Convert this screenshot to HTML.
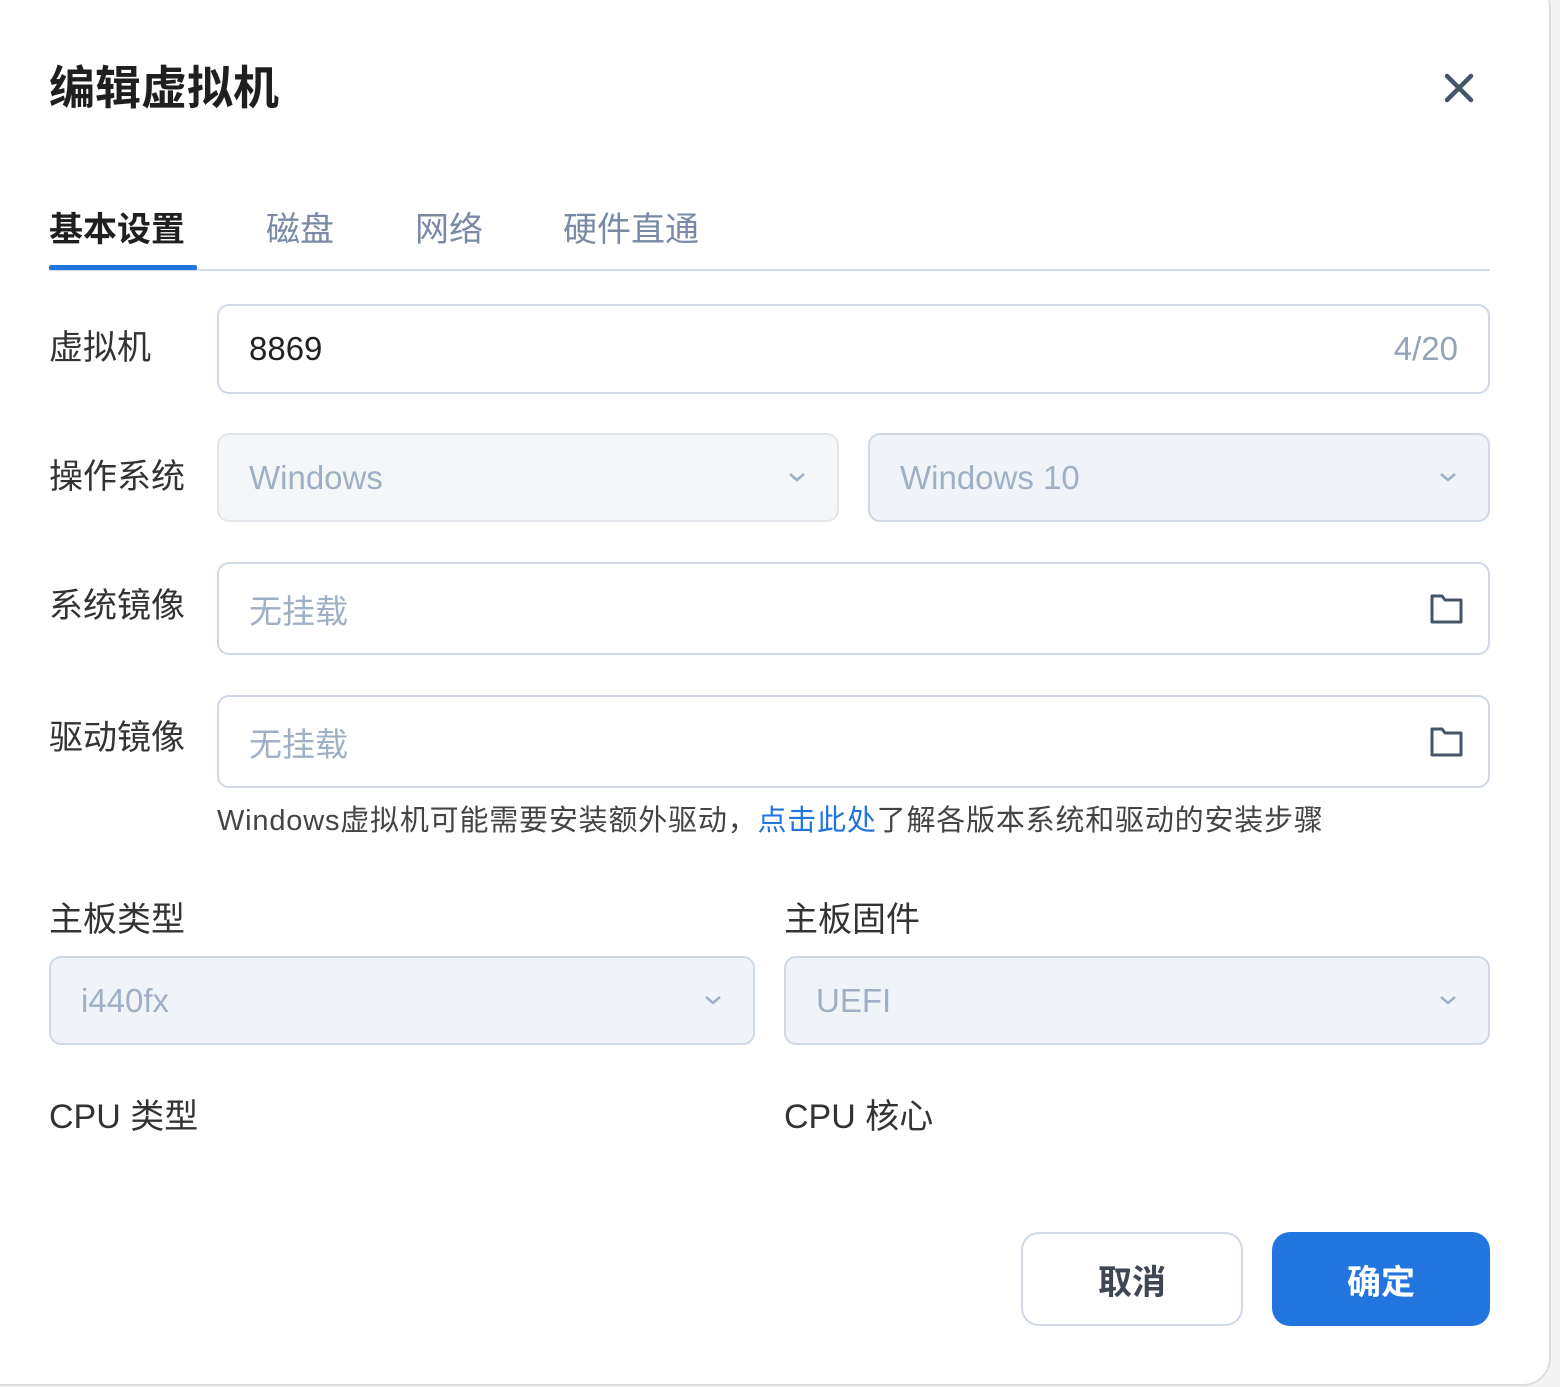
<!DOCTYPE html>
<html><head><meta charset="utf-8"><style>
*{box-sizing:border-box;margin:0;padding:0}
body{width:1560px;height:1387px;background:#f4f4f5;font-family:"Liberation Sans","Noto Sans CJK SC",sans-serif;position:relative;overflow:hidden}
.dlg{position:absolute;left:0;top:-20px;width:1551px;height:1406px;background:#fff;border-radius:0 28px 28px 0;border-right:2px solid #ddd;border-bottom:2px solid #ddd}
.a{position:absolute}
.t{font-size:46px;font-weight:bold;color:#1f1f1f}
.lab{font-size:34px;color:#333}
.tab{font-size:34px;color:#7a8aa6}
.box{position:absolute;border:2px solid #cfd8e4;border-radius:12px;background:#fff;font-size:33px;display:flex;align-items:center;padding-left:30px}
.ph{color:#9fb0c6}
.dis{background:#f0f3f8}
.chev{position:absolute;right:30px;top:50%;margin-top:-8px}
.fold{position:absolute;right:24px;top:50%;margin-top:-16px}
</style></head><body>
<div class="dlg"></div>
<div class="a t" style="left:49px;top:52px">编辑虚拟机</div>
<svg class="a" style="left:1444px;top:73px" width="30" height="30" viewBox="0 0 30 30"><path d="M3 3L27 27M27 3L3 27" stroke="#475569" stroke-width="4.5" stroke-linecap="round"/></svg>
<div class="a" style="left:49px;top:202px;font-size:34px;font-weight:bold;color:#1f1f1f">基本设置</div>
<div class="a tab" style="left:266px;top:202px">磁盘</div>
<div class="a tab" style="left:415px;top:202px">网络</div>
<div class="a tab" style="left:563px;top:202px">硬件直通</div>
<div class="a" style="left:49px;top:269px;width:1441px;height:2px;background:#d3dbe6"></div>
<div class="a" style="left:49px;top:265px;width:148px;height:5px;background:#2275df;border-radius:2px"></div>

<div class="a lab" style="left:49px;top:320px">虚拟机</div>
<div class="box" style="left:217px;top:304px;width:1273px;height:90px;color:#222">8869<span style="position:absolute;right:30px;color:#94a3b8">4/20</span></div>

<div class="a lab" style="left:49px;top:449px">操作系统</div>
<div class="box ph" style="left:217px;top:433px;width:622px;height:89px;background:#f5f6f7;border-color:#e2e6ea">Windows<svg class="chev" width="20" height="14" viewBox="0 0 20 14"><path d="M3 4L10 10L17 4" stroke="#9fb0c6" stroke-width="2.5" fill="none"/></svg></div>
<div class="box ph dis" style="left:868px;top:433px;width:622px;height:89px">Windows 10<svg class="chev" width="20" height="14" viewBox="0 0 20 14"><path d="M3 4L10 10L17 4" stroke="#9fb0c6" stroke-width="2.5" fill="none"/></svg></div>

<div class="a lab" style="left:49px;top:578px">系统镜像</div>
<div class="box ph" style="left:217px;top:562px;width:1273px;height:93px">无挂载<svg class="fold" width="36" height="32" viewBox="0 0 36 32"><path d="M4 3H14L17 7H33V29H4Z" stroke="#475569" stroke-width="3" fill="none" stroke-linejoin="round"/></svg></div>

<div class="a lab" style="left:49px;top:710px">驱动镜像</div>
<div class="box ph" style="left:217px;top:695px;width:1273px;height:93px">无挂载<svg class="fold" width="36" height="32" viewBox="0 0 36 32"><path d="M4 3H14L17 7H33V29H4Z" stroke="#475569" stroke-width="3" fill="none" stroke-linejoin="round"/></svg></div>
<div class="a" style="left:217px;top:797px;font-size:29px;letter-spacing:0.8px;color:#444">Windows虚拟机可能需要安装额外驱动，<span style="color:#2275df">点击此处</span>了解各版本系统和驱动的安装步骤</div>

<div class="a lab" style="left:49px;top:892px">主板类型</div>
<div class="a lab" style="left:784px;top:892px">主板固件</div>
<div class="box ph dis" style="left:49px;top:956px;width:706px;height:89px">i440fx<svg class="chev" width="20" height="14" viewBox="0 0 20 14"><path d="M3 4L10 10L17 4" stroke="#9fb0c6" stroke-width="2.5" fill="none"/></svg></div>
<div class="box ph dis" style="left:784px;top:956px;width:706px;height:89px">UEFI<svg class="chev" width="20" height="14" viewBox="0 0 20 14"><path d="M3 4L10 10L17 4" stroke="#9fb0c6" stroke-width="2.5" fill="none"/></svg></div>

<div class="a lab" style="left:49px;top:1089px">CPU 类型</div>
<div class="a lab" style="left:784px;top:1089px">CPU 核心</div>

<div class="a" style="left:1021px;top:1232px;width:222px;height:94px;border:2px solid #cfd8e4;border-radius:18px;display:flex;align-items:center;justify-content:center;font-size:34px;font-weight:bold;color:#3f4654">取消</div>
<div class="a" style="left:1272px;top:1232px;width:218px;height:94px;background:#2275df;border-radius:18px;display:flex;align-items:center;justify-content:center;font-size:34px;font-weight:bold;color:#fff">确定</div>
</body></html>
